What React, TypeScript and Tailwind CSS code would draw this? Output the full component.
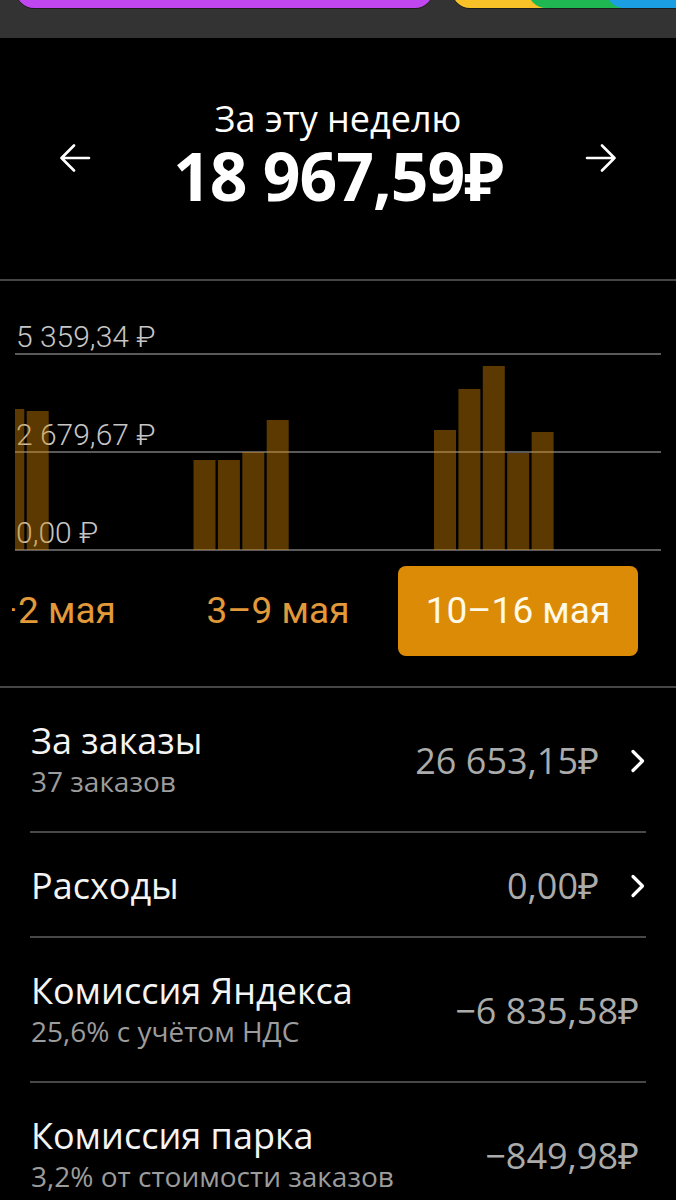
import React from "react";

const sans = { fontFamily: '"Open Sans", "Noto Sans", sans-serif' };
const roboto = { fontFamily: 'Roboto, "Noto Sans", sans-serif' };

function ArrowLeft() {
  return (
    <svg width="32" height="28" viewBox="0 0 32 28" className="mt-[45px] shrink-0" fill="none" stroke="white" strokeWidth="2.6" strokeLinecap="round" strokeLinejoin="round">
      <path d="M30 14H2.5M15 1.5L2.5 14L15 26.5" />
    </svg>
  );
}

function ArrowRight() {
  return (
    <svg width="32" height="28" viewBox="0 0 32 28" className="mt-[45px] shrink-0" fill="none" stroke="white" strokeWidth="2.6" strokeLinecap="round" strokeLinejoin="round">
      <path d="M2 14H29.5M17 1.5L29.5 14L17 26.5" />
    </svg>
  );
}

function Chevron() {
  return (
    <svg width="16" height="24" viewBox="0 0 16 24" className="ml-[31px] shrink-0" fill="none" stroke="white" strokeWidth="3.2" strokeLinecap="round" strokeLinejoin="round">
      <path d="M3 2.5L12.5 12L3 21.5" />
    </svg>
  );
}

const bars: { x: number; top: number }[] = [
  { x: -12.7, top: 88 },
  { x: 11.7, top: 90 },
  { x: 178.5, top: 139 },
  { x: 202.9, top: 139 },
  { x: 227.3, top: 131 },
  { x: 251.7, top: 99 },
  { x: 419, top: 109 },
  { x: 443.4, top: 68 },
  { x: 467.8, top: 45 },
  { x: 492.2, top: 132 },
  { x: 516.6, top: 111 },
];

function GridRow({ label }: { label: string }) {
  return (
    <div>
      <div className="h-[32px] leading-[32px] text-[30px] font-light text-[#c6c6c6] pl-[1px]" style={roboto}>
        {label}
      </div>
      <div className="h-[2px] bg-[#5a5a5a]" />
    </div>
  );
}

type Row = { title: string; sub?: string; value: string; chevron?: boolean };

const rows: Row[] = [
  { title: "За заказы", sub: "37 заказов", value: "26 653,15₽", chevron: true },
  { title: "Расходы", value: "0,00₽", chevron: true },
  { title: "Комиссия Яндекса", sub: "25,6% с учётом НДС", value: "−6 835,58₽" },
  { title: "Комиссия парка", sub: "3,2% от стоимости заказов", value: "−849,98₽" },
];

export default function App() {
  return (
    <div className="w-[676px] h-[1200px] bg-black overflow-hidden text-white" style={sans}>
      {/* top bar */}
      <div className="h-[38px] bg-[#333333] flex">
        <div className="ml-[16px] w-[417px] h-[40px] -mt-[32px] rounded-[18px] bg-[#c046f0] shadow-[0_1px_0_#1c1c1c]" />
        <div className="ml-[19px] flex-1 h-[40px] -mt-[32px] rounded-bl-[18px] overflow-hidden relative bg-[#f8c128] shadow-[0_1px_0_#1c1c1c]">
          <div className="absolute left-[76px] top-0 bottom-0 right-0 rounded-bl-[18px] bg-[#1fb752]" />
          <div className="absolute left-[154px] top-0 bottom-0 right-0 rounded-bl-[18px] bg-[#1c9fe2]" />
        </div>
      </div>

      {/* header */}
      <div className="pt-[61px] pb-[68px] px-[59px] flex items-start justify-between">
        <ArrowLeft />
        <div className="flex flex-col items-center">
          <div className="text-[36px] leading-[40px]">За эту неделю</div>
          <div className="text-[66px] leading-[72px] font-bold tracking-[-1px]">18 967,59₽</div>
        </div>
        <ArrowRight />
      </div>
      <div className="h-[2px] bg-[#454545]" />

      {/* chart */}
      <div className="pt-[40px]">
        <div className="relative mx-[15px] flex flex-col gap-[64px]">
          <GridRow label="5 359,34 ₽" />
          <GridRow label="2 679,67 ₽" />
          <GridRow label="0,00 ₽" />
          <svg className="absolute left-0 top-0" width="647" height="230" viewBox="0 0 647 230">
            {bars.map((b, i) => (
              <rect key={i} x={b.x} y={b.top} width="22" height={229 - b.top} fill="#dc8a00" fillOpacity="0.41" />
            ))}
          </svg>
        </div>
      </div>

      {/* weeks */}
      <div className="mt-[15px] ml-[12px] w-[652px] overflow-hidden">
        <div className="flex -ml-[94px] text-[37px]" style={roboto}>
          <div className="w-[240px] h-[90px] shrink-0 flex items-center justify-center text-[#e1993a] leading-[40px]">
            <span className="-ml-[8px]">26–2 мая</span>
          </div>
          <div className="w-[240px] h-[90px] shrink-0 flex items-center justify-center text-[#e1993a] leading-[40px]">3–9 мая</div>
          <div className="w-[240px] h-[90px] shrink-0 flex items-center justify-center rounded-[8px] bg-[#dc8b06] text-[#fff9e8] leading-[40px]">10–16 мая</div>
        </div>
      </div>
      <div className="mt-[30px] h-[2px] bg-[#454545]" />

      {/* list */}
      <div className="mx-[30px]">
        {rows.map((r, i) => (
          <div key={i}>
            {i > 0 && <div className="h-[2px] bg-[#484848]" />}
            <div className="pt-[33px] pb-[30px] flex items-center justify-between">
              <div className="pl-[1px]">
                <div className="text-[36px] leading-[40px] text-[#f4f4f4]">{r.title}</div>
                {r.sub && <div className="text-[28px] leading-[40px] text-[#9c9c9c]">{r.sub}</div>}
              </div>
              <div className={"flex items-center " + (r.chevron ? "" : "pr-[7px]")}>
                <div className="text-[36px] leading-[40px] text-[#ababab]">{r.value}</div>
                {r.chevron && <Chevron />}
              </div>
            </div>
          </div>
        ))}
      </div>
    </div>
  );
}
